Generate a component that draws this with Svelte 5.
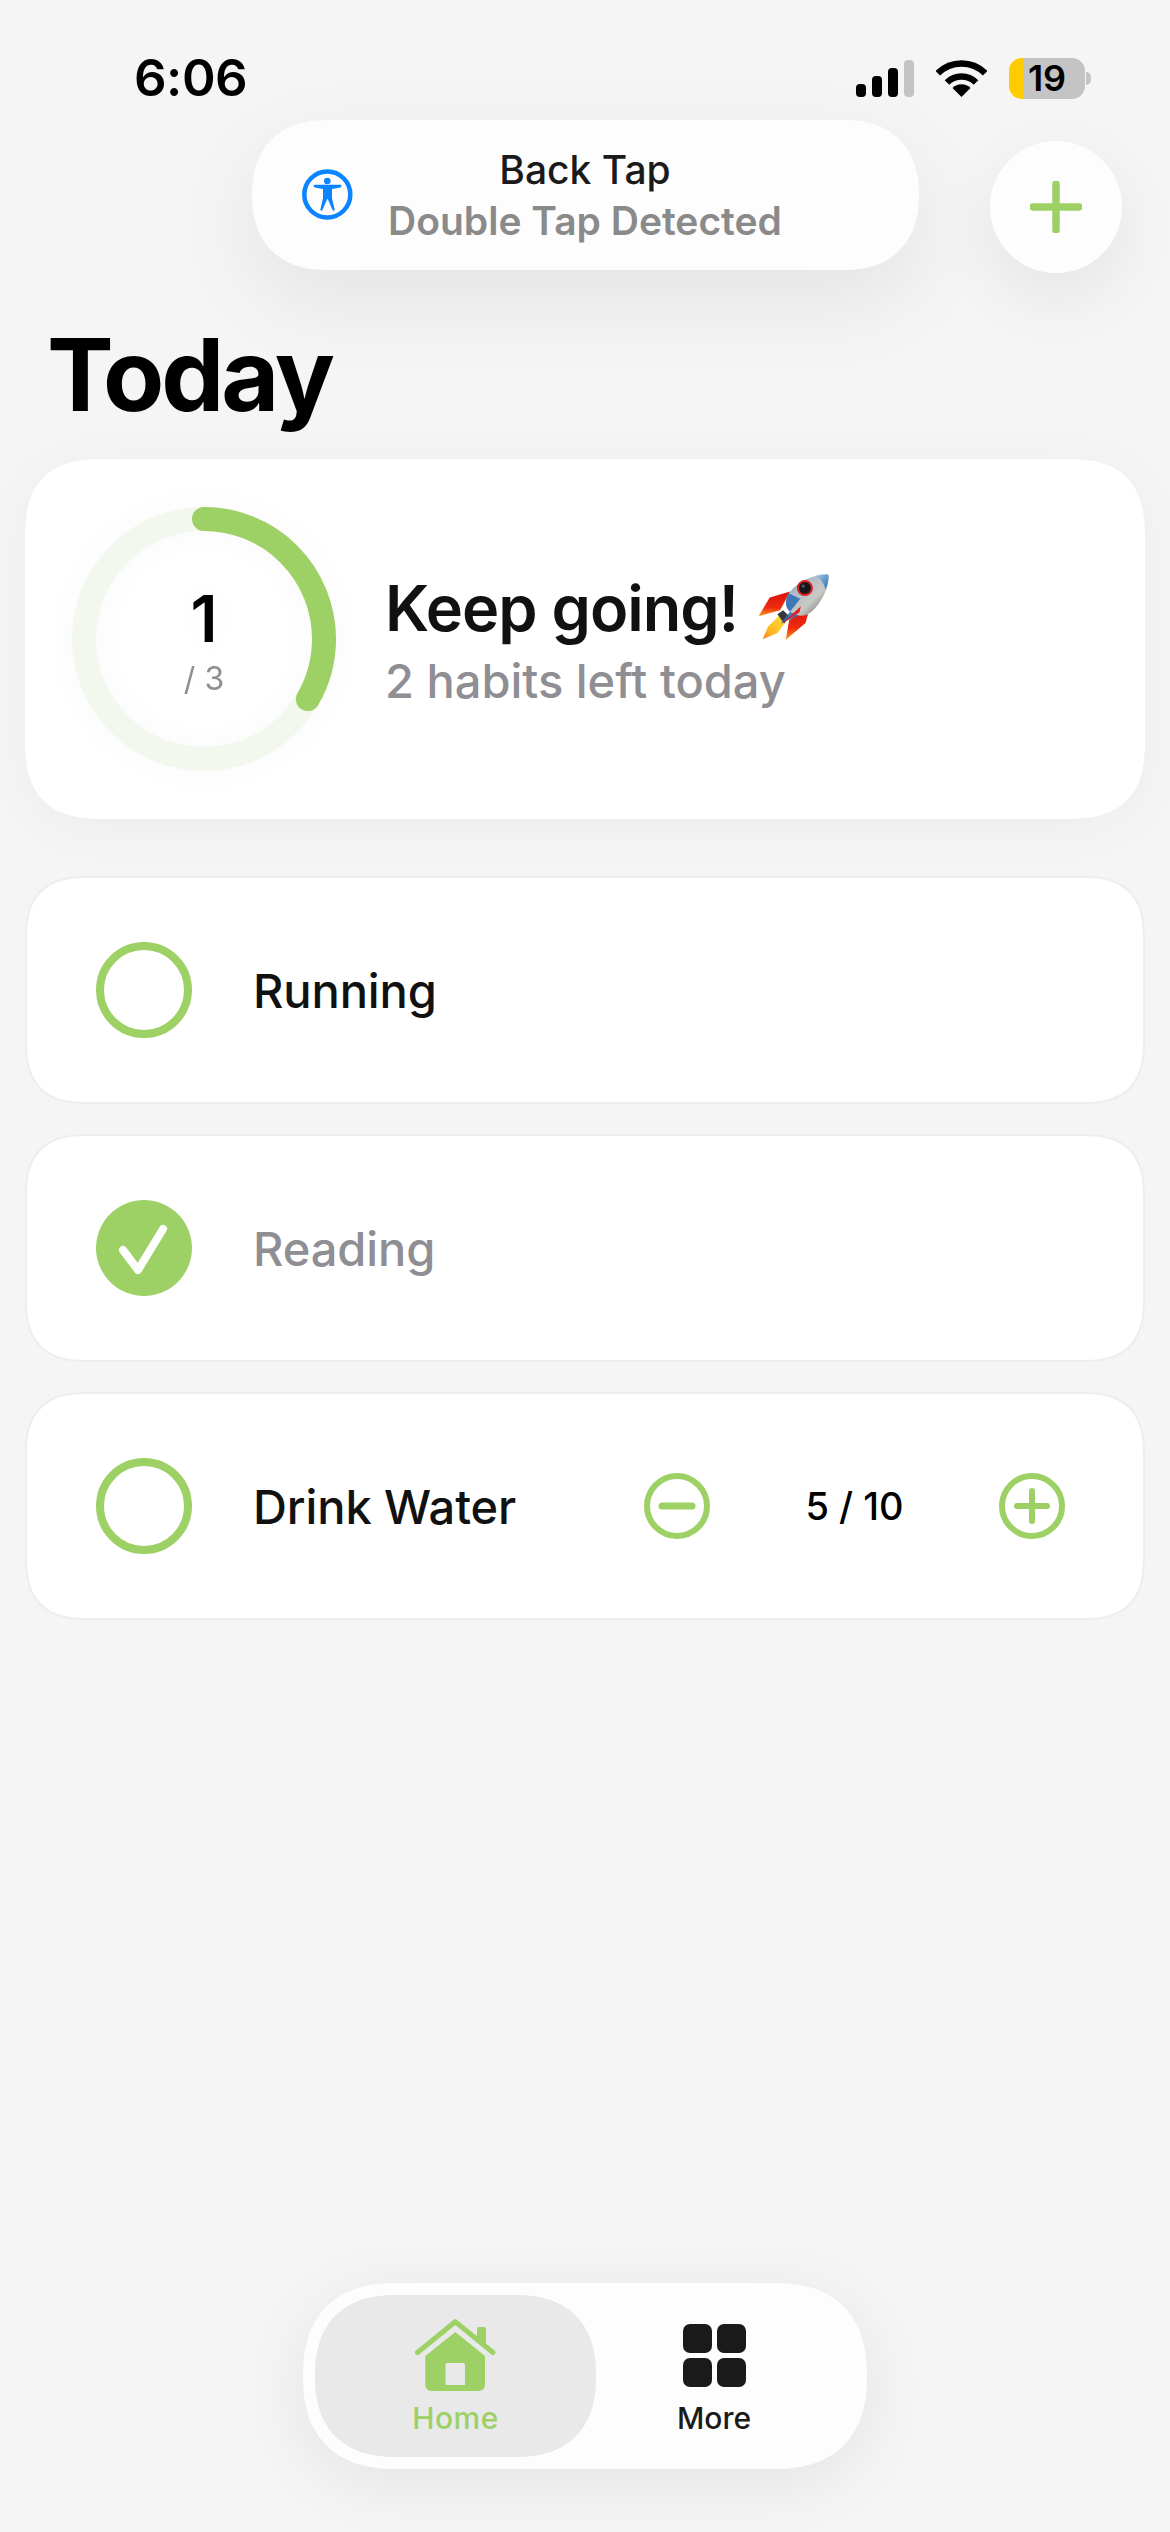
<script>
	const habits = [
		{ name: 'Running', done: false },
		{ name: 'Reading', done: true },
		{ name: 'Drink Water', done: false, count: '5 / 10' }
	];
	const radius = 120;
	const circumference = 2 * Math.PI * radius;
	const progress = 1 / 3;
</script>

<div class="page">
	<header class="status">
		<span class="time">6:06</span>
		<div class="status-icons">
			<svg width="58" height="37" viewBox="0 0 58 37">
				<rect x="0" y="24" width="10" height="13" rx="4" />
				<rect x="16" y="16" width="10" height="21" rx="4" />
				<rect x="32" y="8" width="10" height="29" rx="4" />
				<rect x="48" y="0" width="10" height="37" rx="4" fill="#c4c4c4" />
			</svg>
			<svg width="51" height="37" viewBox="0 0 51 37">
				<path d="M1.8 13.3A33.5 33.5 0 0 1 49.2 13.3" fill="none" stroke="#000" stroke-width="6.5" />
				<path d="M11 22.5A20.5 20.5 0 0 1 40 22.5" fill="none" stroke="#000" stroke-width="6.5" />
				<path d="M25.5 37L16.5 28A12.7 12.7 0 0 1 34.5 28Z" />
			</svg>
			<div class="battery">
				<div class="battery-body"><span>19</span></div>
				<div class="battery-nub"></div>
			</div>
		</div>
	</header>

	<div class="banner">
		<svg class="banner-icon" width="51" height="51" viewBox="0 0 51 51" fill="#0a84ff">
			<circle cx="25.3" cy="25.5" r="23" fill="none" stroke="#0a84ff" stroke-width="4.5" />
			<circle cx="25.3" cy="12" r="3.3" />
			<path d="M13 15.8H38a1.300 1.300 0 0 1 .2 2.600L30 20v9l2.600 11.400a1 1 0 0 1-2 .6L25.700 30h-.4L20.400 41a1 1 0 0 1-2-.6L21 29v-9l-8.200-1.600a1.300 1.300 0 0 1 .2-2.600Z" />
		</svg>
		<div class="banner-text">
			<div class="banner-title">Back Tap</div>
			<div class="banner-sub">Double Tap Detected</div>
		</div>
	</div>

	<button class="add" aria-label="Add habit">
		<svg width="52" height="52" viewBox="0 0 52 52">
			<path d="M26 3V49M3 26H49" stroke="#9dd165" stroke-width="7.5" stroke-linecap="round" />
		</svg>
	</button>

	<h1>Today</h1>

	<section class="summary">
		<div class="ring">
			<svg width="264" height="264" viewBox="0 0 264 264">
				<circle cx="132" cy="132" r={radius} fill="none" stroke="#f3f8ee" stroke-width="24" />
				<circle
					class="ring-progress"
					cx="132"
					cy="132"
					r={radius}
					fill="none"
					stroke="#9dd165"
					stroke-width="24"
					stroke-linecap="round"
					stroke-dasharray="{circumference * progress} {circumference}"
				/>
			</svg>
			<div class="ring-label">
				<span class="ring-count">1</span>
				<span class="ring-total">/ 3</span>
			</div>
		</div>
		<div class="summary-text">
			<div class="summary-title">
				Keep going!
				<svg class="rocket" width="72" height="67" viewBox="50 45 215 200" role="img" aria-label="rocket">
					<defs>
						<linearGradient id="fin" x1="0" y1="0" x2="0" y2="1">
							<stop offset="0" stop-color="#d9120c" />
							<stop offset="0.65" stop-color="#ee2a0e" />
							<stop offset="1" stop-color="#ff9a1a" />
						</linearGradient>
						<linearGradient id="flame" x1="1" y1="0" x2="0" y2="1">
							<stop offset="0" stop-color="#ffe23a" />
							<stop offset="0.7" stop-color="#ffb51f" />
							<stop offset="1" stop-color="#f7791a" />
						</linearGradient>
						<linearGradient id="hull" x1="0" y1="0" x2="1" y2="1">
							<stop offset="0" stop-color="#4f86c2" />
							<stop offset="0.32" stop-color="#aebcc6" />
							<stop offset="0.62" stop-color="#c9c9c4" />
							<stop offset="1" stop-color="#54585a" />
						</linearGradient>
						<linearGradient id="nose" x1="0" y1="0" x2="1" y2="1">
							<stop offset="0" stop-color="#a9c9e2" />
							<stop offset="1" stop-color="#2270ba" />
						</linearGradient>
					</defs>
					<path d="M146 100L85 118L52 174L116 156Z" fill="url(#fin)" />
					<path d="M206 142L192 194L133 244L143 186Z" fill="url(#fin)" />
					<path d="M118 168L80 205L64 243L108 224L134 190Z" fill="url(#flame)" />
					<path d="M108 168L125 156L144 175L128 196Z" fill="#35373a" />
					<path d="M260 50C264 80 244 132 208 162C190 176 168 176 148 162C130 150 130 126 142 106C172 66 226 46 260 50Z" fill="url(#hull)" />
					<path d="M142 106C130 126 130 150 148 162L172 172L118 196L176 122Z" fill="#2f6fb4" opacity=".9" />
					<path d="M222 54C238 50 252 49 260 50C262 60 259 78 252 94C246 74 238 62 222 54Z" fill="url(#nose)" />
					<circle cx="190" cy="90" r="24" fill="#dd1f24" />
					<circle cx="190" cy="90" r="18" fill="#17171b" />
					<circle cx="185" cy="84" r="5" fill="#54575e" />
					<path d="M178 144L122 196L174 162Z" fill="#dd1f24" />
				</svg>
			</div>
			<div class="summary-sub">2 habits left today</div>
		</div>
	</section>

	<ul class="habits">
		{#each habits as habit}
			<li class="habit">
				{#if habit.done}
					<svg class="check" width="96" height="96" viewBox="0 0 96 96">
						<circle cx="48" cy="48" r="48" fill="#9dd165" />
						<path d="M27 50L42 70L67 29" fill="none" stroke="#fff" stroke-width="8" stroke-linecap="round" stroke-linejoin="round" />
					</svg>
				{:else}
					<div class="check-empty"></div>
				{/if}
				<span class="habit-name" class:done={habit.done}>{habit.name}</span>
				{#if habit.count}
					<div class="stepper">
						<svg width="66" height="66" viewBox="0 0 66 66" fill="none" stroke="#9dd165" stroke-linecap="round">
							<circle cx="33" cy="33" r="30" stroke-width="6" />
							<path d="M18 33H48" stroke-width="7" />
						</svg>
						<span class="count">{habit.count}</span>
						<svg width="66" height="66" viewBox="0 0 66 66" fill="none" stroke="#9dd165" stroke-linecap="round">
							<circle cx="33" cy="33" r="30" stroke-width="6" />
							<path d="M18 33H48M33 18V48" stroke-width="6" />
						</svg>
					</div>
				{/if}
			</li>
		{/each}
	</ul>

	<nav class="tabs">
		<div class="tab active">
			<div class="tab-icon">
				<svg width="81" height="72" viewBox="0 0 81 72" fill="#9dd165">
					<path d="M2.500 33.500L40.300 2.700L78 33.500" fill="none" stroke="#9dd165" stroke-width="5" stroke-linecap="round" stroke-linejoin="round" />
					<path d="M62 19V10a2 2 0 0 1 2-2h5a2 2 0 0 1 2 2V27Z" />
					<path fill-rule="evenodd" d="M40.300 13L70 37V66a6 6 0 0 1-6 6H16.300a6 6 0 0 1-6-6V37ZM32 44a1.500 1.500 0 0 0-1.500 1.500V66H50V45.500a1.500 1.500 0 0 0-1.500-1.500Z" />
				</svg>
			</div>
			<span class="tab-label">Home</span>
		</div>
		<div class="tab">
			<div class="tab-icon">
				<div class="grid-icon">
					<i></i><i></i><i></i><i></i>
				</div>
			</div>
			<span class="tab-label">More</span>
		</div>
	</nav>
</div>

<style>
	:global(body) {
		margin: 0;
		background: #f5f5f5;
	}
	.page {
		position: relative;
		display: flex;
		flex-direction: column;
		box-sizing: border-box;
		height: 2532px;
		padding: 0 25px;
		overflow: hidden;
		background: #f5f5f5;
		font-family: Inter, "Liberation Sans", sans-serif;
		color: #111;
	}
	.status {
		display: flex;
		align-items: center;
		justify-content: space-between;
		box-sizing: border-box;
		height: 141px;
		margin: 0 -25px;
		padding: 52px 79px 37px 134px;
	}
	.time {
		font-size: 51px;
		line-height: 52px;
		font-weight: 600;
		letter-spacing: -0.5px;
		color: #000;
	}
	.status-icons {
		display: flex;
		align-items: center;
		gap: 22px;
	}
	.battery {
		display: flex;
		align-items: center;
		gap: 1px;
	}
	.battery-body {
		display: flex;
		align-items: center;
		justify-content: center;
		box-sizing: border-box;
		width: 76px;
		height: 41px;
		border-radius: 13px;
		background: linear-gradient(to right, #ffcc00 14px, #c4c4c4 14px);
		font-size: 36px;
		font-weight: 600;
		color: #000;
	}
	.battery-nub {
		width: 5px;
		height: 13px;
		border-radius: 0 6px 6px 0;
		background: #c4c4c4;
	}
	.banner {
		position: absolute;
		top: 120px;
		left: 252px;
		display: flex;
		align-items: center;
		box-sizing: border-box;
		width: 667px;
		height: 150px;
		padding-left: 50px;
		border-radius: 75px;
		corner-shape: superellipse(1.2);
		background: #fdfdfd;
		box-shadow: 0 30px 90px rgba(0, 0, 0, 0.075);
	}
	.banner-icon {
		flex: none;
		margin-top: -1px;
	}
	.banner-text {
		flex: 1;
		padding-right: 102px;
		text-align: center;
		font-size: 39px;
		line-height: 51px;
	}
	.banner-title {
		font-weight: 500;
		color: #1a1a1a;
	}
	.banner-sub {
		font-weight: 600;
		color: #8a8a8a;
	}
	.add {
		display: flex;
		align-items: center;
		justify-content: center;
		align-self: flex-end;
		width: 132px;
		height: 132px;
		margin-right: 23px;
		padding: 0;
		border: none;
		border-radius: 50%;
		background: #fdfdfd;
		box-shadow: 0 24px 70px rgba(0, 0, 0, 0.07);
	}
	h1 {
		margin: 52px 0 34px 22px;
		font-size: 100px;
		line-height: 1;
		font-weight: 700;
		letter-spacing: -3px;
		color: #000;
	}
	.summary {
		display: flex;
		align-items: center;
		gap: 49px;
		height: 360px;
		padding-left: 47px;
		border-radius: 80px;
		corner-shape: superellipse(1.4);
		background: #fff;
		box-shadow: 0 8px 60px rgba(0, 0, 0, 0.04);
	}
	.ring {
		display: grid;
		flex: none;
		width: 264px;
		height: 264px;
		filter: drop-shadow(0 0 14px rgba(0, 0, 0, 0.025));
	}
	.ring > * {
		grid-area: 1 / 1;
	}
	.ring-progress {
		transform: rotate(-90deg);
		transform-origin: 132px 132px;
	}
	.ring-label {
		display: flex;
		flex-direction: column;
		align-items: center;
		justify-content: center;
		padding-top: 6px;
	}
	.ring-count {
		margin-bottom: 6px;
		font-size: 64px;
		line-height: 68px;
		font-weight: 600;
		color: #000;
	}
	.ring-total {
		font-size: 32px;
		line-height: 40px;
		color: #8e8e93;
	}
	.summary-text {
		margin-top: -2px;
	}
	.summary-title {
		display: flex;
		align-items: center;
		gap: 20px;
		font-size: 63px;
		line-height: 80px;
		font-weight: 600;
		letter-spacing: -1px;
	}
	.rocket {
		flex: none;
		margin-top: -2px;
	}
	.summary-sub {
		margin-top: 5px;
		font-size: 47px;
		line-height: 56px;
		font-weight: 500;
		color: #8e8e93;
	}
	.habits {
		display: flex;
		flex-direction: column;
		gap: 30px;
		margin: 57px 0 0;
		padding: 0;
		list-style: none;
	}
	.habit {
		display: flex;
		align-items: center;
		box-sizing: border-box;
		height: 228px;
		padding: 0 78px 0 69px;
		border: 2px solid #eeeeee;
		border-radius: 64px;
		corner-shape: superellipse(1.4);
		background: #fff;
	}
	.check,
	.check-empty {
		flex: none;
		width: 96px;
		height: 96px;
	}
	.check-empty {
		box-sizing: border-box;
		border: 8px solid #9dd165;
		border-radius: 50%;
	}
	.habit-name {
		margin-left: 61px;
		font-size: 47px;
		font-weight: 500;
		letter-spacing: -0.1px;
		color: #111;
	}
	.habit-name.done {
		color: #8e8e93;
	}
	.stepper {
		display: flex;
		align-items: center;
		justify-content: space-between;
		width: 421px;
		margin-left: auto;
	}
	.count {
		font-size: 38px;
		font-weight: 500;
		color: #000;
	}
	.tabs {
		display: flex;
		align-self: center;
		box-sizing: border-box;
		width: 564px;
		height: 186px;
		margin-top: auto;
		margin-bottom: 63px;
		padding: 12px 34px 12px 12px;
		border-radius: 93px;
		corner-shape: superellipse(1.25);
		background: #fdfdfd;
		box-shadow: 0 14px 70px rgba(0, 0, 0, 0.075);
	}
	.tab {
		display: flex;
		flex-direction: column;
		align-items: center;
		flex: none;
		box-sizing: border-box;
		width: 236px;
		padding-top: 24px;
	}
	.tab.active {
		width: 281px;
		border-radius: 81px;
		corner-shape: superellipse(1.25);
		background: #e9e9e9;
	}
	.tab-icon {
		display: flex;
		align-items: center;
		justify-content: center;
		height: 72px;
		margin-bottom: 9px;
	}
	.tab-label {
		font-size: 30px;
		line-height: 36px;
		font-weight: 500;
		color: #1a1a1a;
	}
	.tab.active .tab-label {
		letter-spacing: 0.5px;
		color: #9dd165;
	}
	.grid-icon {
		display: grid;
		grid-template-columns: 29px 29px;
		grid-auto-rows: 29px;
		gap: 5px;
	}
	.grid-icon i {
		border-radius: 7px;
		background: #1a1a1a;
	}
</style>
